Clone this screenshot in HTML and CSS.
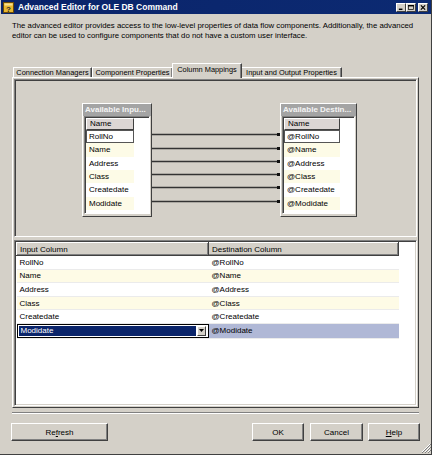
FILE: index.html
```html
<!DOCTYPE html>
<html lang="en">
<head>
    <meta charset="UTF-8">
    <meta name="viewport" content="width=device-width, initial-scale=1.0">
    <title>Advanced Editor for OLE DB Command</title>
    <link rel="stylesheet" href="styles.css">
</head>
<body>
    <div class="window">
        <div class="titlebar">
            <svg class="app-icon" width="11" height="11" viewBox="0 0 11 11">
                <rect x="0.5" y="0.5" width="10" height="10" fill="#e8b830" stroke="#6a4a08"/>
                <rect x="1.5" y="1.5" width="8" height="2" fill="#f8e090"/>
                <text x="5.5" y="9.5" font-size="8" font-weight="bold" text-anchor="middle" fill="#2a2a2a" font-family="Liberation Sans, sans-serif">?</text>
            </svg>
            <span class="title">Advanced Editor for OLE DB Command</span>
            <div class="caption-btns">
                <span class="cap-btn"><svg width="8" height="7" viewBox="0 0 8 7"><rect x="1" y="5" width="5" height="2" fill="#000"/></svg></span>
                <span class="cap-btn"><svg width="8" height="7" viewBox="0 0 8 7"><rect x="0.5" y="0.5" width="7" height="6" fill="none" stroke="#000"/><rect x="0" y="0" width="8" height="2" fill="#000"/></svg></span>
                <span class="cap-btn close"><svg width="8" height="7" viewBox="0 0 8 7"><path d="M1 0.5 L7 6.5 M7 0.5 L1 6.5" stroke="#000" stroke-width="1.6"/></svg></span>
            </div>
        </div>

        <p class="intro">The advanced editor provides access to the low-level properties of data flow components. Additionally, the advanced<br>editor can be used to configure components that do not have a custom user interface.</p>

        <div class="tabs">
            <div class="tab tab-conn">Connection Managers</div>
            <div class="tab tab-comp">Component Properties</div>
            <div class="tab tab-map active">Column Mappings</div>
            <div class="tab tab-io">Input and Output Properties</div>
        </div>

        <div class="panel">
            <div class="mapping">
                <div class="diagram">
                    <div class="colbox box-in">
                        <div class="colbox-title">Available Inpu...</div>
                        <div class="colbox-list">
                            <div class="list-head">Name</div>
                            <div class="list-row focus">RollNo</div>
                            <div class="list-row alt">Name</div>
                            <div class="list-row">Address</div>
                            <div class="list-row alt">Class</div>
                            <div class="list-row">Createdate</div>
                            <div class="list-row alt">Modidate</div>
                        </div>
                    </div>

                    <!-- one line per mapped column -->
                    <svg class="links" width="128" height="114" viewBox="0 0 128 114">
                        <g stroke="#333" stroke-width="1.4">
                            <line x1="0" y1="31.5" x2="127" y2="31.5"/>
                            <line x1="0" y1="45.5" x2="127" y2="45.5"/>
                            <line x1="0" y1="58.5" x2="127" y2="58.5"/>
                            <line x1="0" y1="71.5" x2="127" y2="71.5"/>
                            <line x1="0" y1="84.5" x2="127" y2="84.5"/>
                            <line x1="0" y1="98.5" x2="127" y2="98.5"/>
                        </g>
                        <g fill="#111">
                            <rect x="125" y="30" width="3" height="3"/>
                            <rect x="125" y="44" width="3" height="3"/>
                            <rect x="125" y="57" width="3" height="3"/>
                            <rect x="125" y="70" width="3" height="3"/>
                            <rect x="125" y="83" width="3" height="3"/>
                            <rect x="125" y="97" width="3" height="3"/>
                        </g>
                    </svg>

                    <div class="colbox box-out">
                        <div class="colbox-title">Available Destin...</div>
                        <div class="colbox-list">
                            <div class="list-head">Name</div>
                            <div class="list-row focus">@RollNo</div>
                            <div class="list-row alt">@Name</div>
                            <div class="list-row">@Address</div>
                            <div class="list-row alt">@Class</div>
                            <div class="list-row">@Createdate</div>
                            <div class="list-row alt">@Modidate</div>
                        </div>
                    </div>
                </div>
            </div>

            <div class="grid">
                <table>
                    <thead>
                        <tr><th>Input Column</th><th>Destination Column</th></tr>
                    </thead>
                    <tbody>
                        <tr><td>RollNo</td><td>@RollNo</td></tr>
                        <tr class="alt"><td>Name</td><td>@Name</td></tr>
                        <tr><td>Address</td><td>@Address</td></tr>
                        <tr class="alt"><td>Class</td><td>@Class</td></tr>
                        <tr><td>Createdate</td><td>@Createdate</td></tr>
                        <tr class="selected">
                            <td class="edit-cell">
                                <div class="combo">
                                    <span class="combo-text">Modidate</span>
                                    <span class="combo-btn"><svg width="5" height="3" viewBox="0 0 5 3"><path d="M0 0 H5 L2.5 3 Z" fill="#000"/></svg></span>
                                </div>
                            </td>
                            <td>@Modidate</td>
                        </tr>
                    </tbody>
                </table>
            </div>
        </div>

        <div class="separator"></div>

        <div class="buttons">
            <button class="btn btn-refresh">Re<u>f</u>resh</button>
            <button class="btn btn-ok">OK</button>
            <button class="btn btn-cancel">Cancel</button>
            <button class="btn btn-help"><u>H</u>elp</button>
        </div>

        <svg class="grip" width="10" height="10" viewBox="0 0 10 10">
            <g stroke-width="1">
                <path d="M9 1 L1 9 M9 4 L4 9 M9 7 L7 9" stroke="#fff"/>
                <path d="M10 1 L1 10 M10 4 L4 10 M10 7 L7 10" stroke="#808080"/>
            </g>
        </svg>
    </div>
</body>
</html>
```

FILE: styles.css
```css
body{
    margin: 0;
    font-family: "Liberation Sans", Arial, sans-serif;
    font-size: 8px;
    color: #000;
}
.window{
    width: 432px;
    height: 455px;
    box-sizing: border-box;
    background-color: #d4d0c8;
    border-right: 1px solid #404040;
    border-bottom: 1px solid #404040;
    display: flex;
    flex-direction: column;
}

/* title bar */
.titlebar{
    height: 14px;
    margin-left: 1px;
    padding: 0 2px 0 2px;
    background: linear-gradient(to right, #0a246a, #0c2a72);
    color: #fff;
    display: flex;
    align-items: center;
}
.app-icon{
    margin-right: 4px;
}
.title{
    flex: 1;
    font-weight: bold;
    font-size: 8.5px;
    white-space: nowrap;
}
.caption-btns{
    display: flex;
    align-items: center;
}
.cap-btn{
    width: 10px;
    height: 9px;
    box-sizing: border-box;
    background-color: #d4d0c8;
    border: 1px solid;
    border-color: #fff #404040 #404040 #fff;
    display: flex;
    align-items: center;
    justify-content: center;
}
.cap-btn svg{
    width: 6px;
    height: 5px;
}
.cap-btn.close{
    margin-left: 2px;
    margin-right: 1px;
}

.intro{
    margin: 7px 12px 22px;
    font-size: 7.8px;
    line-height: 10px;
    white-space: nowrap;
}

/* tab strip */
.tabs{
    height: 14px;
    padding-left: 13px;
    display: flex;
    align-items: flex-end;
    font-size: 7.4px;
}
.tab{
    height: 10px;
    box-sizing: border-box;
    border: 1px solid;
    border-bottom: none;
    border-color: #fff #404040 transparent #fff;
    box-shadow: inset -1px 0 #808080;
    text-align: center;
    line-height: 9px;
    white-space: nowrap;
    overflow: hidden;
}
.tab-conn{ width: 79px; }
.tab-comp{ width: 81px; }
.tab-map{ width: 70px; }
.tab-io{ width: 101px; }
.tab.active{
    height: 15px;
    margin: 0 -1px -1px;
    line-height: 11px;
    background-color: #d4d0c8;
    position: relative;
    z-index: 1;
}

.panel{
    margin: 0 12px;
    height: 331px;
    box-sizing: border-box;
    border: 1px solid;
    border-color: #fff #404040 #404040 #fff;
    padding: 1px;
    display: flex;
    flex-direction: column;
    gap: 3px;
}

/* upper part: the two column boxes */
.mapping{
    height: 158px;
    box-sizing: border-box;
    border: 1px solid;
    border-color: #808080 #fff #fff #808080;
    box-shadow: inset 1px 1px #404040, inset -1px -1px #d4d0c8;
    padding: 23px 0 0 67px;
}
.diagram{
    display: flex;
    align-items: flex-start;
}
.colbox{
    height: 114px;
    box-sizing: border-box;
    border: 1px solid;
    border-color: #fff #404040 #404040 #fff;
    background-color: #d4d0c8;
    padding: 0 1px 2px;
    display: flex;
    flex-direction: column;
}
.box-in{ width: 70px; }
.box-out{ width: 77px; }
.colbox-title{
    height: 12px;
    margin: 0 -1px;
    padding-left: 2px;
    background-color: #a4a4a4;
    color: #f4f4f4;
    font-weight: bold;
    line-height: 12px;
    white-space: nowrap;
    overflow: hidden;
}
.colbox-list{
    flex: 1;
    border: 1px solid;
    border-color: #808080 #fff #fff #808080;
    box-shadow: inset 1px 1px #404040;
    background-color: #fff;
    padding: 1px 0 0 1px;
}
.list-head{
    width: 48px;
    height: 12px;
    box-sizing: border-box;
    border: 1px solid;
    border-color: #fff #404040 #404040 #fff;
    background-color: #dcd6d4;
    padding-left: 3px;
    line-height: 10px;
}
.box-out .list-head,
.box-out .list-row{
    width: 56px;
}
.list-row{
    width: 48px;
    height: 13.35px;
    box-sizing: border-box;
    padding-left: 3px;
    line-height: 13px;
    white-space: nowrap;
}
.list-row.alt{
    background-color: #fdfbe7;
}
.list-row.focus{
    border: 1px solid #555;
    padding-left: 2px;
    line-height: 11px;
}

/* lower part: the mapping grid */
.grid{
    flex: 1;
    box-sizing: border-box;
    border: 1px solid;
    border-color: #808080 #fff #fff #808080;
    box-shadow: inset 1px 1px #404040, inset -1px -1px #d4d0c8;
    background-color: #fff;
    padding: 1px;
}
.grid table{
    width: 383px;
    border-collapse: collapse;
    table-layout: fixed;
}
.grid th{
    height: 13px;
    box-sizing: border-box;
    padding: 0 0 0 3px;
    text-align: left;
    font-weight: normal;
    background-color: #d4d0c8;
    border: 1px solid;
    border-color: #fff #404040 #404040 #fff;
    box-shadow: inset -1px -1px #808080;
}
.grid th:first-child{
    width: 192px;
}
.grid td{
    height: 13.6px;
    box-sizing: border-box;
    padding: 0 0 0 3px;
    border-bottom: 1px solid #ebebeb;
    white-space: nowrap;
}
.grid tr.alt td{
    background-color: #fefbe6;
}
.grid tr.selected td{
    background-color: #b0b8d6;
}
.grid td.edit-cell{
    padding: 0;
    background-color: #fff;
}
.combo{
    height: 14px;
    box-sizing: border-box;
    border: 1px solid #000;
    display: flex;
    background-color: #fff;
}
.combo-text{
    flex: 1;
    margin: 1px 0 1px 1px;
    padding-left: 2px;
    background-color: #0a246a;
    color: #fff;
    line-height: 10px;
}
.combo-btn{
    width: 9px;
    margin: 1px 2px 1px 1px;
    box-sizing: border-box;
    border: 1px solid;
    border-color: #fff #404040 #404040 #fff;
    background-color: #d4d0c8;
    display: flex;
    align-items: center;
    justify-content: center;
}

.separator{
    margin: 4px 12px 0;
    border-top: 1px solid #808080;
    border-bottom: 1px solid #fff;
}

/* dialog buttons */
.buttons{
    margin-top: 9px;
    padding: 0 11px;
    display: flex;
}
.btn{
    height: 18px;
    padding: 0;
    font-family: "Liberation Sans", Arial, sans-serif;
    font-size: 8px;
    color: #000;
    background-color: #d4d0c8;
    border: 1px solid;
    border-color: #fff #404040 #404040 #fff;
    box-shadow: inset -1px -1px #808080;
}
.btn-refresh{
    width: 97px;
    margin-right: auto;
}
.btn-ok{ width: 52px; }
.btn-cancel{
    width: 53px;
    margin-left: 6px;
}
.btn-help{
    width: 52px;
    margin-left: 5px;
}

.grip{
    margin-top: auto;
    margin-bottom: 1px;
    align-self: flex-end;
}
```
